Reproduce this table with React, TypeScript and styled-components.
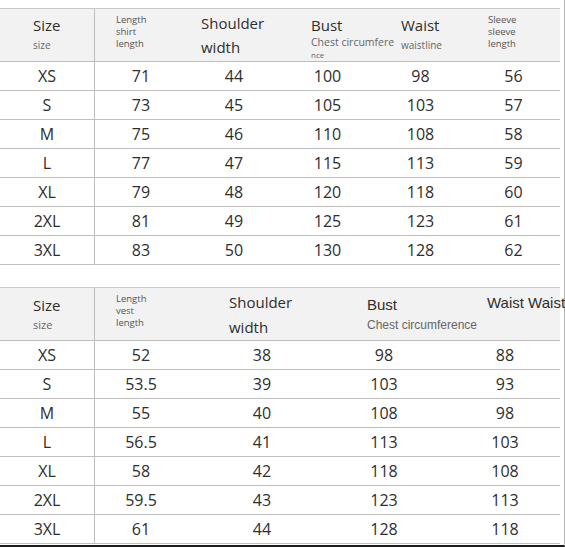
import React from 'react'
import styled, { createGlobalStyle } from 'styled-components'

const GlobalStyle = createGlobalStyle`
  html, body {
    margin: 0;
    padding: 0;
    background: #fff;
    overflow: hidden;
  }
  body {
    font-family: "Open Sans", "Noto Sans", sans-serif;
    color: #2e2e2e;
  }
`

interface HeadLine {
  t: string
  size: number
  lh: number
  color?: string
  font?: string
}

interface HeadCol {
  pad: number
  top: number
  lines: HeadLine[]
}

interface ChartData {
  cols: number[]
  head: HeadCol[]
  rows: string[][]
}

const Page = styled.div`
  width: 565px;
  height: 547px;
  box-sizing: border-box;
  padding-top: 8px;
  border-right: 1px solid #b4b4b4;
  border-bottom: 2px solid #1c1c1c;
  display: flex;
  flex-direction: column;
  gap: 22px;
`

const Table = styled.div`
  width: 560px;
  display: flex;
  flex-direction: column;
`

const Row = styled.div<{ $cols: string }>`
  width: 560px;
  height: 29px;
  box-sizing: border-box;
  display: grid;
  grid-template-columns: ${p => p.$cols};
  border-bottom: 1px solid #bdbdbd;
`

const HeadRow = styled(Row)`
  height: 54px;
  background: #f2f2f2;
  border-top: 1px solid #c8c8c8;
`

const Cell = styled.div<{ $divider?: boolean }>`
  display: flex;
  align-items: center;
  justify-content: center;
  font-size: 16px;
  color: #2e2e2e;
  border-right: ${p => (p.$divider ? '1px solid #bdbdbd' : 'none')};
`

const HeadCell = styled.div<{ $pad: number; $top: number; $divider?: boolean }>`
  display: flex;
  flex-direction: column;
  align-items: flex-start;
  padding-left: ${p => p.$pad}px;
  padding-top: ${p => p.$top}px;
  box-sizing: border-box;
  white-space: nowrap;
  border-right: ${p => (p.$divider ? '1px solid #bdbdbd' : 'none')};
`

const HeadText = styled.div<{ $size: number; $lh: number; $color: string; $font: string }>`
  font-size: ${p => p.$size}px;
  line-height: ${p => p.$lh}px;
  height: ${p => p.$lh}px;
  color: ${p => p.$color};
  font-family: ${p => p.$font};
`

const OPEN = '"Open Sans", "Noto Sans", sans-serif'
const ARIAL = '"Liberation Sans", Arial, sans-serif'

const big = (t: string, lh = 20, font = OPEN): HeadLine => ({ t, size: 15, lh, color: '#2e2e2e', font })
const sub = (t: string, size = 10, lh = 20, font = OPEN): HeadLine => ({ t, size, lh, color: '#666', font })
const tiny = (t: string, lh = 12): HeadLine => ({ t, size: 9.5, lh, color: '#555' })

const shirt: ChartData = {
  cols: [95, 92, 94, 93, 93, 93],
  head: [
    { pad: 33, top: 6, lines: [big('Size'), sub('size')] },
    { pad: 21, top: 5, lines: [tiny('Length'), tiny('shirt'), tiny('length')] },
    { pad: 14, top: 2, lines: [big('Shoulder', 24), big('width', 24)] },
    { pad: 30, top: 6, lines: [big('Bust'), sub('Chest circumfere', 10.5, 15), sub('nce', 8, 9)] },
    { pad: 27, top: 6, lines: [big('Waist'), sub('waistline')] },
    { pad: 21, top: 5, lines: [tiny('Sleeve'), tiny('sleeve'), tiny('length')] },
  ],
  rows: [
    ['XS', '71', '44', '100', '98', '56'],
    ['S', '73', '45', '105', '103', '57'],
    ['M', '75', '46', '110', '108', '58'],
    ['L', '77', '47', '115', '113', '59'],
    ['XL', '79', '48', '120', '118', '60'],
    ['2XL', '81', '49', '125', '123', '61'],
    ['3XL', '83', '50', '130', '128', '62'],
  ],
}

const vest: ChartData = {
  cols: [95, 92, 150, 94, 148],
  head: [
    { pad: 33, top: 7, lines: [big('Size'), sub('size', 11)] },
    { pad: 21, top: 5, lines: [tiny('Length'), tiny('vest'), tiny('length')] },
    { pad: 42, top: 2, lines: [big('Shoulder', 24), big('width', 26)] },
    { pad: 30, top: 7, lines: [big('Bust', 20, ARIAL), sub('Chest circumference', 12, 20, ARIAL)] },
    { pad: 56, top: 5, lines: [big('Waist Waist', 20, ARIAL)] },
  ],
  rows: [
    ['XS', '52', '38', '98', '88'],
    ['S', '53.5', '39', '103', '93'],
    ['M', '55', '40', '108', '98'],
    ['L', '56.5', '41', '113', '103'],
    ['XL', '58', '42', '118', '108'],
    ['2XL', '59.5', '43', '123', '113'],
    ['3XL', '61', '44', '128', '118'],
  ],
}

function SizeTable({ data }: { data: ChartData }) {
  const cols = data.cols.map(c => `${c}px`).join(' ')
  return (
    <Table>
      <HeadRow $cols={cols}>
        {data.head.map((h, i) => (
          <HeadCell key={i} $pad={h.pad} $top={h.top} $divider={i === 0}>
            {h.lines.map((l, j) => (
              <HeadText key={j} $size={l.size} $lh={l.lh} $color={l.color || '#2e2e2e'} $font={l.font || OPEN}>
                {l.t}
              </HeadText>
            ))}
          </HeadCell>
        ))}
      </HeadRow>
      {data.rows.map((r, i) => (
        <Row $cols={cols} key={i}>
          {r.map((v, j) => (
            <Cell key={j} $divider={j === 0}>{v}</Cell>
          ))}
        </Row>
      ))}
    </Table>
  )
}

export default function App() {
  return (
    <>
      <GlobalStyle />
      <Page>
        <SizeTable data={shirt} />
        <SizeTable data={vest} />
      </Page>
    </>
  )
}
